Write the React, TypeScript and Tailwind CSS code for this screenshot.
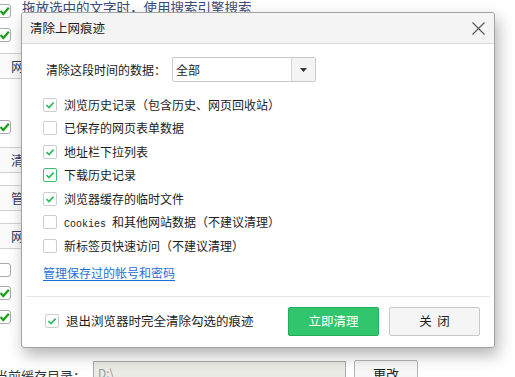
const font = "font-['Noto_Sans_CJK_SC','Noto_Sans',sans-serif]"

const Check = ({ checked, focus }: { checked?: boolean; focus?: boolean }) => (
  <span
    className={`flex h-[14px] w-[14px] shrink-0 items-center justify-center rounded-[2px] border bg-white ${
      focus ? "border-[#3cc06c]" : "border-[#cdcdcd]"
    }`}>
    {checked && (
      <svg width="10" height="10" viewBox="0 0 10 10">
        <path d="M1.5 5.2 L4 7.6 L8.6 2.6" fill="none" stroke="#2dbb5d" strokeWidth="1.7" />
      </svg>
    )}
  </span>
)

const OldCheck = ({ checked }: { checked?: boolean }) => (
  <span className="flex h-[14px] w-[14px] shrink-0 items-center justify-center rounded-[3px] border border-[#a9a9a9] bg-white">
    {checked && (
      <svg width="11" height="10" viewBox="0 0 11 10">
        <path d="M1.5 5 L4.3 8 L9.8 1.8" fill="none" stroke="#17a117" strokeWidth="2.2" />
      </svg>
    )}
  </span>
)

const SideButton = ({ label, top }: { label: string; top: string }) => (
  <div
    className={`${top} flex h-[26px] w-[120px] -ml-[30px] items-center border border-[#d2d2d2] bg-[#fbfbfb] pl-[43px] text-[13px] text-[#2f3d5c]`}>
    {label}
  </div>
)

const options = [
  { label: "浏览历史记录（包含历史、网页回收站）", checked: true },
  { label: "已保存的网页表单数据", checked: false },
  { label: "地址栏下拉列表", checked: true },
  { label: "下载历史记录", checked: true, focus: true },
  { label: "浏览器缓存的临时文件", checked: true },
  { label: "cookies", checked: false },
  { label: "新标签页快速访问（不建议清理）", checked: false }
]

export default function App() {
  return (
    <div className={`relative h-[377px] w-[515px] overflow-hidden bg-white ${font}`}>
      {/* page behind the dialog */}
      <div className="flex flex-col -ml-[3px]">
        <div className="mt-[4px] flex h-[14px] items-center">
          <OldCheck checked />
          <span className="ml-[11px] -mt-[8px] text-[13.5px] leading-[14px] text-[#3a4c78]">
            拖放选中的文字时，使用搜索引擎搜索
          </span>
        </div>
        <div className="mt-[10px] flex h-[14px]">
          <OldCheck checked />
        </div>
        <SideButton label="网页" top="mt-[11px]" />
        <div className="mt-[41px] flex h-[14px]">
          <OldCheck checked />
        </div>
        <SideButton label="清除" top="mt-[13px]" />
        <SideButton label="管理" top="mt-[12px]" />
        <SideButton label="网页" top="mt-[12px]" />
        <div className="mt-[14px] flex h-[14px]">
          <OldCheck />
        </div>
        <div className="mt-[9px] flex h-[14px]">
          <OldCheck checked />
        </div>
        <div className="mt-[10px] flex h-[14px]">
          <OldCheck checked />
        </div>
        <div className="mt-[37px] flex items-start">
          <span className="mt-[5px] -ml-[2px] w-[98px] text-[13px] text-[#333]">当前缓存目录：</span>
          <div className="h-[24px] w-[253px] border border-[#aaaaaa] bg-[#ebebe5] pl-[4px] text-[12px] leading-[22px] text-[#9a9a9a]">
            D:\
          </div>
          <div className="ml-[8px] -mt-[1px] flex h-[26px] w-[64px] justify-center rounded-[2px] border border-[#b4b4b4] bg-[#f7f7f7] pt-[3px] text-[13px] text-[#222]">
            更改
          </div>
        </div>
      </div>

      {/* dialog */}
      <div className="absolute left-[21px] top-[12px] flex h-[336px] w-[474px] flex-col rounded-[3px] border border-[#a3a3a3] bg-white text-[12px] text-[#1c1c1c] shadow-[3px_7px_16px_rgba(0,0,0,0.3)]">
        <div className="flex h-[31px] shrink-0 items-center justify-between rounded-t-[3px] border-b border-[#dcdcdc] bg-[#f4f4f4] pl-[8px] pr-[9px]">
          <span className="text-[12.5px] text-[#222]">清除上网痕迹</span>
          <svg width="13" height="13" viewBox="0 0 13 13">
            <path d="M0.5 0.5 L12.5 12.5 M12.5 0.5 L0.5 12.5" stroke="#555" strokeWidth="1.1" />
          </svg>
        </div>

        <div className="mt-[13px] flex items-center pl-[24px]">
          <span className="w-[126px]">清除这段时间的数据：</span>
          <div className="flex h-[25px] w-[144px] items-stretch rounded-[2px] border border-[#c9c9c9] bg-white">
            <span className="flex flex-1 items-center pl-[3px]">全部</span>
            <span className="flex w-[24px] items-center justify-center border-l border-[#d6d6d6] bg-[#f4f4f4]">
              <svg width="7" height="4" viewBox="0 0 7 4">
                <path d="M0 0 H7 L3.5 4 Z" fill="#333" />
              </svg>
            </span>
          </div>
        </div>

        <div className="mt-[11px] flex flex-col pl-[21px]">
          {options.map((o) => (
            <div key={o.label} className="flex h-[23.5px] items-center gap-[7px]">
              <Check checked={o.checked} focus={o.focus} />
              {o.label === "cookies" ? (
                <span>
                  <span className="font-['Liberation_Mono',monospace] text-[10px]">Cookies</span>
                  <span className="ml-[6px]">和其他网站数据（不建议清理）</span>
                </span>
              ) : (
                <span>{o.label}</span>
              )}
            </div>
          ))}
          <a className="mt-[6px] w-fit text-[#1f6fd6] underline underline-offset-2" href="#">
            管理保存过的帐号和密码
          </a>
        </div>

        <div className="mx-[4px] mt-[14px] h-px bg-[#e3e6ec]" />

        <div className="mt-[10px] flex items-center pl-[23px] pr-[14px]">
          <Check checked />
          <span className="ml-[7px] flex-1 text-[12.5px]">退出浏览器时完全清除勾选的痕迹</span>
          <button className="h-[29px] w-[91px] rounded-[2px] border border-[#22ad5a] bg-[#31c56e] text-[12.5px] text-white">
            立即清理
          </button>
          <button className="ml-[10px] h-[29px] w-[91px] rounded-[2px] border border-[#c9c9c9] bg-[#f5f5f5] text-[12.5px] text-[#222]">
            关&nbsp;&nbsp;闭
          </button>
        </div>
      </div>
    </div>
  )
}
